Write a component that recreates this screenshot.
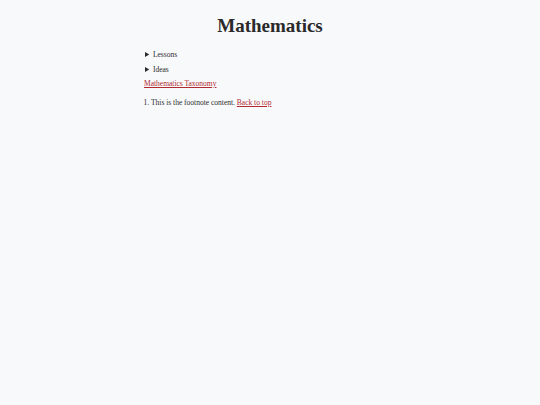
export default function App() {
  return (
    <div className="min-h-[405px] w-full bg-[#f8f9fb] text-[#2b2b2b] font-['Liberation_Serif',serif]">
      <div className="mx-auto w-[252px] pt-[15px]">
        <h1 className="text-center text-[19px] font-bold leading-[22px] text-[#2a2a2a]">
          Mathematics
        </h1>
        <div className="mt-[13px] text-[7.5px] leading-[10px]">
          <details className="pl-[1px]">
            <summary className="cursor-pointer">Lessons</summary>
          </details>
          <details className="mt-[5px] pl-[1px]">
            <summary className="cursor-pointer">Ideas</summary>
          </details>
          <a href="#" className="mt-[4px] block text-[#b02a30] underline">
            Mathematics Taxonomy
          </a>
          <ol className="mt-[9px] list-decimal pl-[7px]">
            <li>
              This is the footnote content.{" "}
              <a href="#" className="text-[#b02a30] underline">
                Back to top
              </a>
            </li>
          </ol>
        </div>
      </div>
    </div>
  );
}
